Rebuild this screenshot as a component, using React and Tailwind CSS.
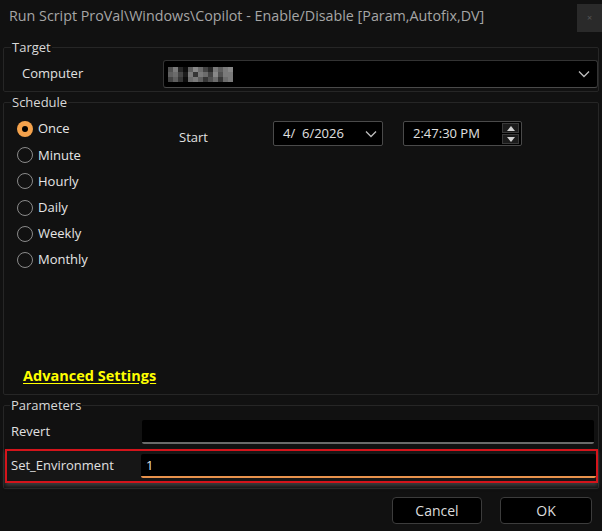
import React from "react";

const options = ["Once", "Minute", "Hourly", "Daily", "Weekly", "Monthly"];

function Chevron({ className }) {
  return (
    <svg width="12" height="8" viewBox="0 0 12 8" className={className}>
      <path d="M1 1.5 L6 6.5 L11 1.5" fill="none" stroke="#bdbdbd" strokeWidth="1.3" />
    </svg>
  );
}

function Radio({ label, checked }) {
  return (
    <div className="flex items-center h-[26.2px]">
      {checked ? (
        <span className="w-[16px] h-[16px] rounded-full bg-[#f4a24c] flex items-center justify-center">
          <span className="w-[6px] h-[6px] rounded-full bg-black" />
        </span>
      ) : (
        <span className="w-[16px] h-[16px] rounded-full border-[1.5px] border-[#8a8a8a]" />
      )}
      <span className="ml-[5px] text-[13px] text-[#e6e6e6]">{label}</span>
    </div>
  );
}

const mosaic = [
  ["#666", "#999", "#333", "#111", "#777", "#aaa", "#888", "#555", "#333", "#999", "#777", "#999", "#aaa"],
  ["#777", "#888", "#555", "#222", "#999", "#444", "#999", "#888", "#555", "#aaa", "#666", "#999", "#999"],
  ["#555", "#777", "#444", "#111", "#888", "#999", "#777", "#444", "#666", "#888", "#444", "#888", "#999"],
];

export default function App() {
  return (
    <div className="w-[602px] h-[531px] bg-[#111111] text-[#dcdcdc] text-[13px] font-['Segoe_UI','Open_Sans',sans-serif] overflow-hidden flex flex-col">
      {/* Title bar */}
      <div className="h-[32px] flex items-start shrink-0">
        <div className="flex-1 pl-[9px] pt-[6px] text-[14.3px] text-[#a6a6a6] leading-[20px]">
          Run Script ProVal\Windows\Copilot - Enable/Disable [Param,Autofix,DV]
        </div>
        <div className="w-[25px] h-[28px] mt-[4px] bg-[#2a2a2a] flex items-center justify-center text-[9px] text-[#555]">
          ×
        </div>
      </div>

      {/* Target */}
      <fieldset className="mx-[3px] mt-[6px] border border-[#262626] rounded-[2px] shrink-0">
        <legend className="ml-[7px] px-[1px] leading-[18px] text-[13px] text-[#d8d8d8]">Target</legend>
        <div className="flex items-center mt-[4px] mb-[3px] h-[28px]">
          <span className="pl-[18px] w-[159px] text-[#e0e0e0]">Computer</span>
          <div className="flex-1 h-[28px] bg-black border border-[#333] border-b-[#4a4a4a] rounded-[3px] flex items-center justify-between pl-[4px] pr-[7px]">
            <div className="flex flex-col opacity-80">
              {mosaic.map((row, r) => (
                <div key={r} className="flex">
                  {row.map((c, i) => (
                    <span key={i} className="w-[5px] h-[5px]" style={{ backgroundColor: c }} />
                  ))}
                </div>
              ))}
            </div>
            <Chevron />
          </div>
        </div>
      </fieldset>

      {/* Schedule */}
      <fieldset className="mx-[3px] mt-[1px] border border-[#262626] rounded-[2px] shrink-0">
        <legend className="ml-[7px] px-[1px] leading-[18px] text-[13px] text-[#d8d8d8]">Schedule</legend>
        <div className="h-[283px] flex flex-col">
          <div className="flex pt-[5px]">
            <div className="pl-[13px] w-[175px] flex flex-col">
              {options.map((o, i) => (
                <Radio key={o} label={o} checked={i === 0} />
              ))}
            </div>
            <div className="flex items-start pt-[5px]">
              <span className="w-[94px] pt-[7px] text-[#e0e0e0]">Start</span>
              <div className="w-[110px] h-[25px] bg-black border border-[#4a4a4a] rounded-[2px] flex items-center justify-between pl-[9px] pr-[5px] text-[#e0e0e0]">
                <span>4/&nbsp;&nbsp;6/2026</span>
                <Chevron />
              </div>
              <div className="ml-[20px] w-[119px] h-[25px] bg-black border border-[#4a4a4a] rounded-[2px] flex items-center justify-between pl-[9px] pr-[2px] text-[#e0e0e0]">
                <span>2:47:30 PM</span>
                <div className="flex flex-col gap-[1px]">
                  <div className="w-[17px] h-[10px] bg-[#1b1b1b] border border-[#3a3a3a] flex items-center justify-center">
                    <svg width="8" height="5" viewBox="0 0 8 5"><path d="M0 5 L4 0 L8 5 Z" fill="#d0d0d0" /></svg>
                  </div>
                  <div className="w-[17px] h-[10px] bg-[#1b1b1b] border border-[#3a3a3a] flex items-center justify-center">
                    <svg width="8" height="5" viewBox="0 0 8 5"><path d="M0 0 L4 5 L8 0 Z" fill="#d0d0d0" /></svg>
                  </div>
                </div>
              </div>
            </div>
          </div>
          <div className="mt-auto mb-[8px] pl-[19px]">
            <span className="text-[14.5px] font-bold text-[#ffff00] underline underline-offset-2 leading-[18px]">
              Advanced Settings
            </span>
          </div>
        </div>
      </fieldset>

      {/* Parameters */}
      <fieldset className="mx-[3px] mt-[1px] border border-[#262626] rounded-[2px] shrink-0">
        <legend className="ml-[6px] px-[1px] leading-[18px] text-[13px] text-[#d8d8d8]">Parameters</legend>
        <div className="flex items-center mt-[6px] h-[24px]">
          <span className="pl-[7px] w-[138px] text-[#e0e0e0]">Revert</span>
          <div className="w-[452px] h-[24px] bg-black border-b-2 border-[#6a6a6a] rounded-[2px]" />
        </div>
        <div className="mt-[5px] mb-[5px] ml-[1px] w-[593px] h-[34px] border-2 border-[#d4141b] bg-[#161616] flex items-center shadow-[0_3px_4px_rgba(90,90,90,0.6)]">
          <span className="pl-[4px] w-[134px] text-[#e0e0e0]">Set_Environment</span>
          <div className="flex-1 h-[24px] bg-black border-b-2 border-[#e8924c] rounded-[2px] pl-[5px] text-[#e6e6e6] leading-[22px]">
            1
          </div>
        </div>
      </fieldset>

      {/* Buttons */}
      <div className="flex justify-end gap-[18px] pr-[10px] mt-[8px]">
        <button className="w-[90px] h-[27px] bg-black border border-[#3c3c3c] rounded-[4px] text-[14px] text-[#dcdcdc]">
          Cancel
        </button>
        <button className="w-[92px] h-[27px] bg-black border border-[#3c3c3c] rounded-[4px] text-[14px] text-[#dcdcdc]">
          OK
        </button>
      </div>
    </div>
  );
}
